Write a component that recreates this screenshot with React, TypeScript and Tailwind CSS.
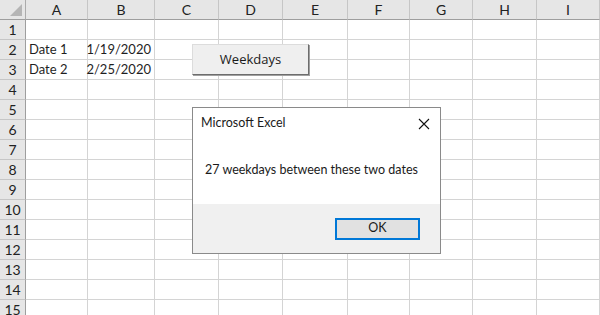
const cols = ["A", "B", "C", "D", "E", "F", "G", "H", "I"];
const rows = Array.from({ length: 15 }, (_, i) => i + 1);

const cellData: Record<string, { text: string; right?: boolean }> = {
  "2-0": { text: "Date 1" },
  "2-1": { text: "1/19/2020", right: true },
  "3-0": { text: "Date 2" },
  "3-1": { text: "2/25/2020", right: true },
};

export default function App() {
  return (
    <div className="relative h-[315px] w-[600px] overflow-hidden bg-white font-['Lato','Noto_Sans',sans-serif] text-[13px] text-[#1f1f1f]">
      <div className="grid grid-cols-[26px_62px_67px_64px_64px_65px_62px_63px_64px_63px] auto-rows-[20px]">
        <div className="relative border-r border-b border-r-[#ababab] border-b-[#9e9e9e] bg-[#e6e6e6]">
          <div className="absolute right-[3px] bottom-[3px] h-0 w-0 border-b-[12px] border-l-[12px] border-b-[#b5b5b5] border-l-transparent" />
        </div>
        {cols.map((c) => (
          <div
            key={c}
            className="flex items-center justify-center border-r border-b border-r-[#c6c6c6] border-b-[#9e9e9e] bg-[#e6e6e6] text-[14px] text-[#222]"
          >
            {c}
          </div>
        ))}
        {rows.map((r) => (
          <div key={r} className="contents">
            <div className="flex items-center justify-center border-r border-b border-r-[#9e9e9e] border-b-[#c6c6c6] bg-[#e6e6e6] text-[14px] text-[#222]">
              {r}
            </div>
            {cols.map((c, ci) => {
              const d = cellData[`${r}-${ci}`];
              return (
                <div
                  key={c}
                  className={`flex items-center border-r border-b border-[#d4d4d4] px-[3px] whitespace-nowrap ${
                    d?.right ? "justify-end" : "justify-start"
                  }`}
                >
                  {d?.text}
                </div>
              );
            })}
          </div>
        ))}
      </div>

      <button className="absolute left-[192px] top-[44px] flex h-[31px] w-[117px] items-center justify-center border border-[#dcdcdc] border-r-[#6d6d6d] border-b-[#6d6d6d] bg-[#efefef] shadow-[1px_1px_0_#a0a0a0] font-['Open_Sans',sans-serif] text-[13px] text-[#1a1a1a]">
        Weekdays
      </button>

      <div className="absolute left-[192px] top-[107px] flex h-[147px] w-[249px] flex-col border border-[#8a8a8a] bg-white font-['Lato',sans-serif] text-[12.5px] text-[#1a1a1a]">
        <div className="flex h-[31px] items-center justify-between pl-[8px] pr-[9px]">
          <span>Microsoft Excel</span>
          <svg width="12" height="12" viewBox="0 0 12 12" className="mr-[1px]">
            <path d="M1 1 L11 11 M11 1 L1 11" stroke="#111" strokeWidth="1.1" />
          </svg>
        </div>
        <div className="flex flex-1 items-center pl-[12px] pb-[2px]">27 weekdays between these two dates</div>
        <div className="flex h-[49px] items-center justify-end bg-[#f0f0f0] pr-[20px]">
          <div className="flex h-[22px] w-[85px] items-center justify-center border-2 border-[#0078d7] bg-[#e1e1e1]">
            OK
          </div>
        </div>
      </div>
    </div>
  );
}
